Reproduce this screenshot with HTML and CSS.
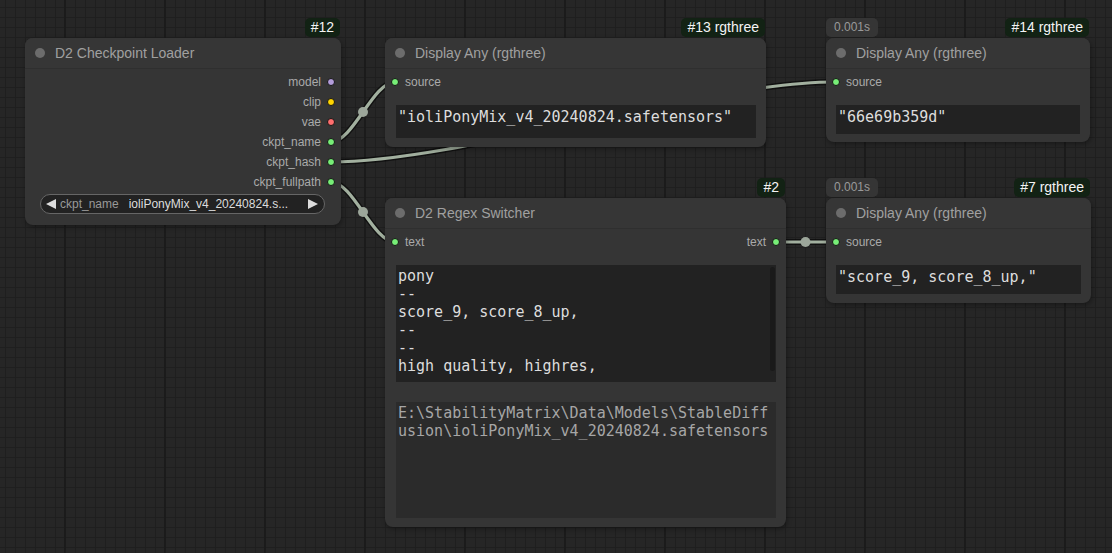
FILE: index.html
```html
<!DOCTYPE html>
<html>
<head>
<meta charset="utf-8">
<link rel="stylesheet" href="styles.css">
</head>
<body>
<div class="canvas">
  <svg class="links" width="1112" height="553" viewBox="0 0 1112 553">
    <g class="link-shadow">
      <path d="M331,142 C353,142 373,82 395,82"/>
      <path d="M331,162 C458.6,162 707.4,82 835,82"/>
      <path d="M331,182 C353,182 373,242 395,242"/>
      <path d="M776,242 L835,242"/>
    </g>
    <g class="link-line">
      <path d="M331,142 C353,142 373,82 395,82"/>
      <path d="M331,162 C458.6,162 707.4,82 835,82"/>
      <path d="M331,182 C353,182 373,242 395,242"/>
      <path d="M776,242 L835,242"/>
    </g>
    <g class="link-mid">
      <circle cx="363" cy="112" r="5"/>
      <circle cx="363" cy="212" r="5"/>
      <circle cx="805.5" cy="242" r="5"/>
    </g>
  </svg>

  <div class="node n12">
    <div class="badge id">#12</div>
    <div class="title"><span class="tdot"></span><span>D2 Checkpoint Loader</span></div>
    <div class="body">
      <div class="slot out"><span>model</span><i class="dot c-model"></i></div>
      <div class="slot out"><span>clip</span><i class="dot c-clip"></i></div>
      <div class="slot out"><span>vae</span><i class="dot c-vae"></i></div>
      <div class="slot out"><span>ckpt_name</span><i class="dot c-str"></i></div>
      <div class="slot out"><span>ckpt_hash</span><i class="dot c-str"></i></div>
      <div class="slot out"><span>ckpt_fullpath</span><i class="dot c-str"></i></div>
      <div class="combo">
        <svg class="arrow" width="10" height="10" viewBox="0 0 10 10"><polygon points="10,0 10,10 0,5"/></svg>
        <span class="combo-label">ckpt_name</span>
        <span class="combo-value">ioliPonyMix_v4_20240824.s...</span>
        <svg class="arrow" width="10" height="10" viewBox="0 0 10 10"><polygon points="0,0 0,10 10,5"/></svg>
      </div>
    </div>
  </div>

  <div class="node n13">
    <div class="badge id">#13 rgthree</div>
    <div class="title"><span class="tdot"></span><span>Display Any (rgthree)</span></div>
    <div class="body">
      <div class="slot in"><i class="dot c-str"></i><span>source</span></div>
      <div class="text-area ta13">"ioliPonyMix_v4_20240824.safetensors"</div>
    </div>
  </div>

  <div class="node n14">
    <div class="badge time">0.001s</div>
    <div class="badge id">#14 rgthree</div>
    <div class="title"><span class="tdot"></span><span>Display Any (rgthree)</span></div>
    <div class="body">
      <div class="slot in"><i class="dot c-str"></i><span>source</span></div>
      <div class="text-area ta14">"66e69b359d"</div>
    </div>
  </div>

  <div class="node n2">
    <div class="badge id">#2</div>
    <div class="title"><span class="tdot"></span><span>D2 Regex Switcher</span></div>
    <div class="body">
      <div class="slot both">
        <span class="pair"><i class="dot c-str"></i><span>text</span></span>
        <span class="pair"><span>text</span><i class="dot c-str"></i></span>
      </div>
      <div class="text-area ta-regex">
        <div class="ta-content">pony
--
score_9, score_8_up,
--
--
high quality, highres,</div>
        <div class="scroll"><div class="thumb"></div></div>
      </div>
      <div class="text-area ta-path">E:\StabilityMatrix\Data\Models\StableDiff
usion\ioliPonyMix_v4_20240824.safetensors</div>
    </div>
  </div>

  <div class="node n7">
    <div class="badge time">0.001s</div>
    <div class="badge id">#7 rgthree</div>
    <div class="title"><span class="tdot"></span><span>Display Any (rgthree)</span></div>
    <div class="body">
      <div class="slot in"><i class="dot c-str"></i><span>source</span></div>
      <div class="text-area ta7">"score_9, score_8_up,"</div>
    </div>
  </div>
</div>
</body>
</html>
```

FILE: styles.css
```css
* { box-sizing: border-box; }

html, body {
  margin: 0;
  padding: 0;
  background: #252525;
}

.canvas {
  position: relative;
  width: 1112px;
  height: 553px;
  overflow: hidden;
  font-family: "Liberation Sans", Arial, sans-serif;
  background-color: #262626;
  background-image:
    linear-gradient(to right, #1b1b1b 0 2px, transparent 2px),
    linear-gradient(to right, #1f1f1f 0 1px, transparent 1px),
    linear-gradient(to bottom, #1f1f1f 0 1px, transparent 1px);
  background-size: 100px 100%, 10px 10px, 10px 10px;
  background-position: 64px 0, 5px 0, 0 7px;
}

.links {
  position: absolute;
  left: 0;
  top: 0;
}

.link-shadow path {
  fill: none;
  stroke: rgba(0, 0, 0, 0.55);
  stroke-width: 6;
}

.link-line path {
  fill: none;
  stroke: #a2b09f;
  stroke-width: 3.2;
}

.link-mid circle {
  fill: #9ca69a;
}

/* nodes */
.node {
  position: absolute;
  background: #353535;
  border-radius: 8px;
  box-shadow: 1px 2px 5px rgba(0, 0, 0, 0.35);
}

.n12 { left: 25px; top: 38px; width: 316px; }
.n13 { left: 385px; top: 38px; width: 381px; }
.n14 { left: 826px; top: 38px; width: 264px; }
.n2  { left: 385px; top: 198px; width: 401px; }
.n7  { left: 826px; top: 198px; width: 265px; }

.title {
  height: 31px;
  display: flex;
  align-items: center;
  gap: 10px;
  padding-left: 10px;
  background: #363636;
  border-bottom: 1px solid #2f2f2f;
  border-radius: 8px 8px 0 0;
  color: #a0a0a0;
  font-size: 14px;
}

.tdot {
  width: 10px;
  height: 10px;
  border-radius: 50%;
  background: #6c6c6c;
  flex: none;
}

.body {
  padding: 3px 0 0;
  display: flex;
  flex-direction: column;
}

.n12 .body { padding-bottom: 11px; }
.n13 .body { padding-bottom: 9px; }
.n14 .body { padding-bottom: 8px; }
.n2 .body  { padding-bottom: 9px; }
.n7 .body  { padding-bottom: 9px; }

.slot {
  height: 20px;
  display: flex;
  align-items: center;
  gap: 6px;
  color: #aaaaaa;
  font-size: 12px;
}

.slot.out {
  justify-content: flex-end;
  padding-right: 6px;
}

.slot.in {
  padding-left: 6px;
}

.slot.both {
  justify-content: space-between;
  padding: 0 6px;
}

.pair {
  display: flex;
  align-items: center;
  gap: 6px;
}

.dot {
  display: block;
  width: 8px;
  height: 8px;
  border-radius: 50%;
  border: 1px solid #151515;
  flex: none;
}

.c-model { background: #b39ddb; }
.c-clip  { background: #ffd500; }
.c-vae   { background: #ff6e6e; }
.c-str   { background: #77ee77; }

/* badges */
.badge {
  position: absolute;
  bottom: 100%;
  margin-bottom: 1px;
  height: 19px;
  line-height: 19px;
  border-radius: 5px;
  white-space: nowrap;
}

.badge.id {
  right: 1px;
  padding: 0 6px;
  background: #122214;
  color: #f4f4f4;
  font-size: 14px;
}

.badge.time {
  left: 0;
  padding: 0 8px;
  background: #353535;
  color: #9a9a9a;
  font-size: 12px;
}

/* combo widget */
.combo {
  margin: 2px 16px 0 15px;
  height: 20px;
  border: 1px solid #666666;
  border-radius: 10px;
  background: #222222;
  display: flex;
  align-items: center;
  padding: 0 6px 0 5px;
  font-size: 12px;
}

.arrow { flex: none; }
.arrow polygon { fill: #dddddd; }

.combo-label {
  color: #999999;
  margin-left: 4px;
}

.combo-value {
  color: #dddddd;
  margin-left: 10px;
  flex: 1;
  white-space: nowrap;
  overflow: hidden;
}

/* text areas */
.text-area {
  margin: 13px 10px 0 11px;
  background: #222222;
  color: #dddddd;
  font-family: "DejaVu Sans Mono", "Liberation Mono", monospace;
  font-size: 15px;
  line-height: 18px;
  padding: 3px 2px;
  white-space: pre;
  overflow: hidden;
}

.ta13 { height: 33px; }
.ta14 { height: 29px; margin-left: 10px; }
.ta7  { height: 29px; margin-left: 10px; }

.ta-regex {
  height: 117px;
  display: flex;
  padding: 2px 1px 0 2px;
}

.ta-content {
  flex: 1;
  white-space: pre;
  overflow: hidden;
}

.scroll {
  width: 5px;
  flex: none;
  padding-top: 0;
}

.thumb {
  height: 104px;
  border-radius: 3px;
  background: #1a1a1a;
}

.ta-path {
  margin-top: 20px;
  height: 116px;
  background: #2b2b2b;
  color: #a6a6a6;
  padding-top: 2px;
}
```
